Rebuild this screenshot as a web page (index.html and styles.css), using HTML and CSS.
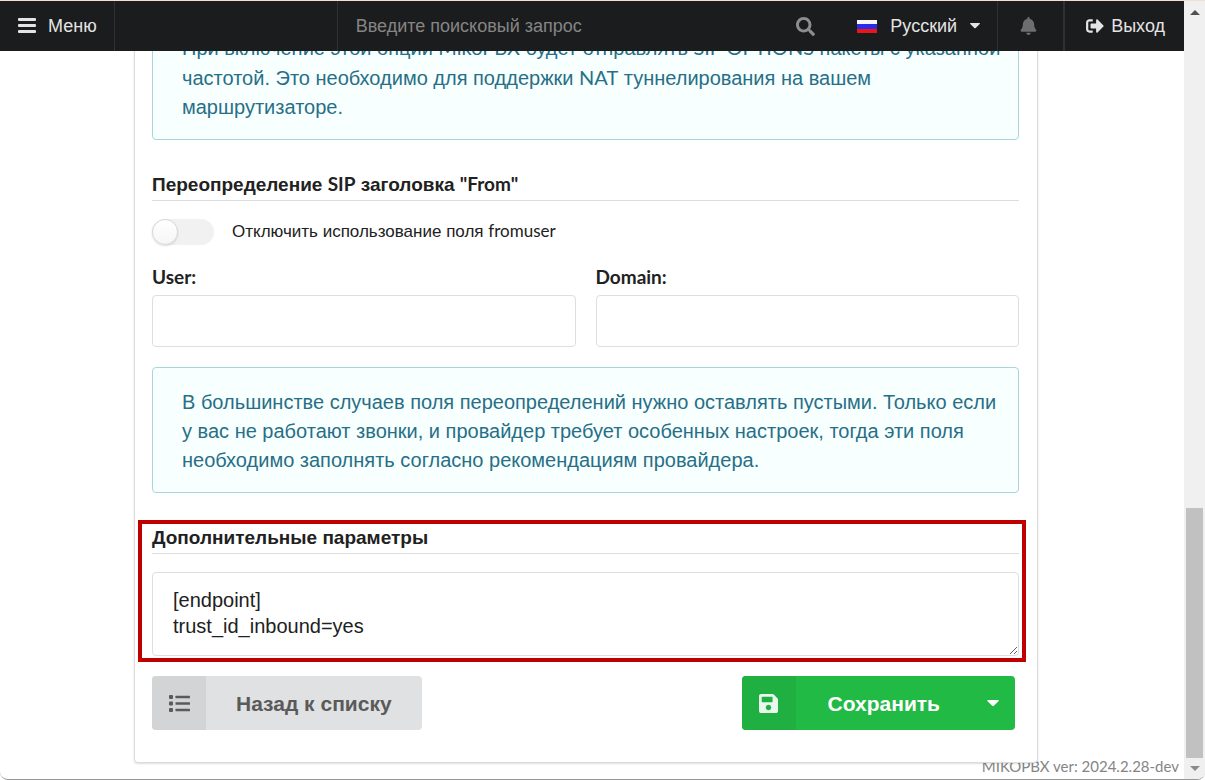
FILE: index.html
```html
<!DOCTYPE html>
<html lang="ru">
<head>
<meta charset="utf-8">
<title>MikoPBX</title>
<link rel="stylesheet" href="styles.css">
</head>
<body>
<div class="window">
  <div class="page">
    <header class="topbar">
      <button class="bar-item menu" type="button">
        <svg class="icon-menu" viewBox="0 0 18 16" aria-hidden="true"><g fill="currentColor"><rect y="0" width="18" height="3" rx="1"/><rect y="6" width="18" height="3" rx="1"/><rect y="12" width="18" height="3" rx="1"/></g></svg>
        Меню
      </button>
      <div class="bar-gap"></div>
      <div class="search">
        <input type="text" aria-label="Поиск" placeholder="Введите поисковый запрос">
        <svg class="icon-search" viewBox="0 0 512 512" aria-hidden="true"><path fill="currentColor" d="M505 442.7 405.300 343c-4.500-4.500-10.600-7-17-7H372c27.600-35.300 44-79.700 44-128C416 93.100 322.900 0 208 0S0 93.100 0 208s93.100 208 208 208c48.300 0 92.700-16.400 128-44v16.300c0 6.400 2.500 12.500 7 17l99.700 99.700c9.400 9.400 24.600 9.400 33.900 0l28.300-28.300c9.400-9.400 9.400-24.600.1-34zM208 336c-70.700 0-128-57.200-128-128 0-70.700 57.200-128 128-128 70.700 0 128 57.200 128 128 0 70.700-57.200 128-128 128z"/></svg>
      </div>
      <button class="bar-item language" type="button">
        <svg class="flag" viewBox="0 0 20 13" aria-hidden="true"><rect width="20" height="13" fill="#f01515"/><rect width="20" height="9" fill="#2b2bea"/><rect width="20" height="4" fill="#f6f6fc"/></svg>
        Русский
        <svg class="caret" viewBox="0 0 10 6" aria-hidden="true"><path fill="currentColor" d="M.5 0h9q.8.300.2 1L5.700 5q-.7.700-1.400 0L.3 1Q-.3.300.5 0z"/></svg>
      </button>
      <button class="bar-item bell" type="button" aria-label="Уведомления">
        <svg class="icon-bell" viewBox="0 0 448 512" aria-hidden="true"><path fill="currentColor" d="M224 512c35.300 0 64-28.700 64-64H160c0 35.300 28.600 64 64 64zm215.400-149.700c-19.300-20.800-55.500-52-55.500-154.300 0-77.700-54.500-139.900-127.900-155.200V32c0-17.700-14.300-32-32-32s-32 14.300-32 32v20.800C118.600 68.100 64.100 130.300 64.100 208c0 102.300-36.200 133.500-55.500 154.300-6 6.400-8.700 14.100-8.600 21.700.1 16.400 13 32 32.100 32h383.800c19.100 0 32-15.600 32.100-32 0-7.600-2.700-15.300-8.600-21.700z"/></svg>
      </button>
      <a class="bar-item logout" href="#">
        <svg class="icon-logout" viewBox="0 0 512 400" aria-hidden="true"><path fill="currentColor" d="m497 217-168 168c-15 15-41 4.500-41-17v-96H152c-13.300 0-24-10.700-24-24v-96c0-13.300 10.700-24 24-24h136V32c0-21.400 25.900-32 41-17l168 168c9.300 9.400 9.300 24.600 0 34zM192 380v-40c0-6.600-5.400-12-12-12H96c-17.700 0-32-14.300-32-32V104c0-17.700 14.300-32 32-32h84c6.600 0 12-5.400 12-12V20c0-6.600-5.400-12-12-12H96C43 8 0 51 0 104v192c0 53 43 96 96 96h84c6.600 0 12-5.400 12-12z"/></svg>
        Выход
      </a>
    </header>

    <main class="viewport">
      <form class="panel">
        <div class="message">При включение этой опции <span class="lat">MikoPBX</span> будет отправлять <span class="lat">SIP OPTIONS</span> пакеты с указанной<br>частотой. Это необходимо для поддержки <span class="lat">NAT</span> туннелирования на вашем<br>маршрутизаторе.</div>

        <h4 class="heading from-heading">Переопределение <span class="lat">SIP</span> заголовка <span class="lat">"From"</span></h4>
        <label class="toggle"><input type="checkbox"><span>Отключить использование поля <span class="lat">fromuser</span></span></label>

        <div class="fields">
          <div class="field"><label for="user">User:</label><input id="user" type="text"></div>
          <div class="field"><label for="domain">Domain:</label><input id="domain" type="text"></div>
        </div>

        <div class="message">В большинстве случаев поля переопределений нужно оставлять пустыми. Только если<br>у вас не работают звонки, и провайдер требует особенных настроек, тогда эти поля<br>необходимо заполнять согласно рекомендациям провайдера.</div>

        <section class="extra">
          <h4 class="heading"><label for="params">Дополнительные параметры</label></h4>
          <textarea id="params" rows="2" spellcheck="false">[endpoint]
trust_id_inbound=yes</textarea>
        </section>

        <div class="actions">
          <button class="btn" type="button">
            <span class="btn-icon"><svg class="icon-list" viewBox="0 0 21 17" aria-hidden="true"><g fill="currentColor"><rect width="4" height="4" rx="1"/><rect y="6.500" width="4" height="4" rx="1"/><rect y="13" width="4" height="4" rx="1"/><rect x="6.500" y=".7" width="14.500" height="2.600" rx=".6"/><rect x="6.500" y="7.200" width="14.500" height="2.600" rx=".6"/><rect x="6.500" y="13.700" width="14.500" height="2.600" rx=".6"/></g></svg></span>
            <span class="btn-text">Назад к списку</span>
          </button>
          <div class="split">
            <button class="btn save" type="button">
              <span class="btn-icon"><svg class="icon-save" viewBox="0 0 448 448" aria-hidden="true"><path fill="currentColor" d="m433.900 97.900-83.800-83.800A48 48 0 0 0 316.100 0H48C21.500 0 0 21.500 0 48v352c0 26.500 21.500 48 48 48h352c26.500 0 48-21.500 48-48V131.900a48 48 0 0 0-14.100-34zM224 384c-35.300 0-64-28.700-64-64s28.700-64 64-64 64 28.700 64 64-28.700 64-64 64zm96-304.500V180c0 6.600-5.400 12-12 12H76c-6.600 0-12-5.400-12-12V76c0-6.600 5.400-12 12-12h228.500c3.200 0 6.200 1.300 8.500 3.500l3.500 3.500c2.200 2.300 3.500 5.300 3.500 8.500z"/></svg></span>
              <span class="btn-text">Сохранить</span>
            </button>
            <button class="btn save more" type="button" aria-label="Другие действия">
              <svg class="caret" viewBox="0 0 10 6" aria-hidden="true"><path fill="currentColor" d="M.5 0h9q.8.300.2 1L5.700 5q-.7.700-1.400 0L.3 1Q-.3.300.5 0z"/></svg>
            </button>
          </div>
        </div>
      </form>
      <footer class="version">MIKOPBX ver: 2024.2.28-dev</footer>
    </main>
  </div>

  <div class="scrollbar" aria-hidden="true">
    <svg class="arrow" viewBox="0 0 10 5"><path fill="#505050" d="M0 5 5 0l5 5z"/></svg>
    <div class="track"><div class="thumb"></div></div>
    <svg class="arrow" viewBox="0 0 10 5"><path fill="#8a8a8a" d="M0 0h10L5 5z"/></svg>
  </div>
</div>
</body>
</html>
```
FILE: styles.css
```css
* {
  box-sizing: border-box;
}

body {
  margin: 0;
  background: #fff;
  color: #212121;
  font: 18px "Liberation Sans", Arial, sans-serif;
}

button,
input,
textarea {
  font-family: inherit;
}

.lat {
  font-family: Lato, sans-serif;
  font-variant-ligatures: none;
}

.window {
  display: flex;
  height: 100vh;
  overflow: hidden;
  border-top: 1px solid #f3ddd6;
  border-bottom: 1px solid #979797;
  border-radius: 0 0 8px 8px;
}

.page {
  flex: 1;
  min-width: 0;
  display: flex;
  flex-direction: column;
}

/* Top bar */

.topbar {
  display: flex;
  flex: none;
  height: 50px;
  background: #1b1c1d;
  color: #e4e4e4;
  position: relative;
  z-index: 2;
}

.bar-item {
  display: flex;
  align-items: center;
  padding: 0 18px;
  border: 0;
  background: none;
  color: inherit;
  font-size: 18px;
  text-decoration: none;
}

.menu {
  gap: 12px;
  padding-right: 17px;
  border-right: 1px solid #303132;
}

.bar-gap {
  flex: 0 1 223px;
  border-right: 1px solid #303132;
}

.search {
  flex: 1;
  display: flex;
  align-items: center;
  padding: 0 24px 0 18px;
}

.search input {
  flex: 1;
  min-width: 0;
  padding: 0;
  border: 0;
  outline: 0;
  background: none;
  color: #fff;
  font-size: 18px;
}

.search input::placeholder {
  color: #858585;
  opacity: 1;
}

.language {
  gap: 13px;
  padding-right: 17px;
  border-right: 1px solid #303132;
}

.bell {
  padding: 0 26px 0 22px;
  color: #6e6e6e;
  border-right: 2px solid #303132;
}

.logout {
  gap: 7px;
  padding: 0 19px 0 21px;
}

.icon-menu {
  width: 18px;
  height: 16px;
}

.icon-search {
  width: 19px;
  height: 19px;
  color: #8d8d8d;
}

.flag {
  width: 20px;
  height: 13px;
}

.caret {
  width: 10px;
  height: 6px;
}

.icon-bell {
  width: 17px;
  height: 18px;
}

.icon-logout {
  width: 18px;
  height: 14px;
}

/* Content, anchored to the end of the page */

.viewport {
  flex: 1;
  min-height: 0;
  display: flex;
  flex-direction: column;
  justify-content: flex-end;
  overflow: hidden;
}

.panel {
  flex: none;
  margin: 0 146px 0 134px;
  padding: 17px 18px 32px 17px;
  background: #fff;
  border: 1px solid #dcdcdd;
  border-radius: 4px;
  box-shadow: 0 1px 2px rgba(34, 36, 38, 0.15);
  position: relative;
  z-index: 1;
}

.message {
  padding: 20px 29px 17px;
  border: 1px solid #a9d5de;
  border-radius: 4px;
  background: #f8ffff;
  color: #276f86;
  font-size: 20px;
  line-height: 29px;
  white-space: nowrap;
}

.heading {
  margin: 0;
  padding-bottom: 3px;
  border-bottom: 1px solid #dcdddd;
  font-size: 19px;
  font-weight: 700;
  line-height: 24px;
}

.from-heading {
  margin-top: 32px;
}

.toggle {
  display: flex;
  align-items: center;
  gap: 18px;
  margin-top: 17px;
  font-size: 17px;
  line-height: 26px;
}

.toggle input {
  appearance: none;
  width: 62px;
  height: 26px;
  margin: 0;
  border-radius: 13px;
  background: #f1f1f1;
}

.toggle input::before {
  content: "";
  display: block;
  box-sizing: border-box;
  width: 26px;
  height: 26px;
  border: 1px solid #d8d8d9;
  border-radius: 50%;
  background: linear-gradient(#fff, #f6f6f6);
  box-shadow: 0 1px 2px rgba(34, 36, 38, 0.15);
}

.toggle input:checked::before {
  margin-left: auto;
}

.fields {
  display: grid;
  grid-template-columns: 1fr 1fr;
  gap: 20px;
  margin: 20px 0;
}

.field {
  display: grid;
  gap: 6px;
}

.field label {
  font: 700 19px/24px Lato, sans-serif;
}

.field input,
textarea {
  width: 100%;
  border: 1px solid #dededf;
  border-radius: 4px;
  background: #fff;
  color: #212121;
  font-size: 20px;
  outline: 0;
}

.field input {
  height: 52px;
  padding: 0 20px;
}

.extra {
  position: relative;
  margin-top: 33px;
}

/* Highlight frame around the section */
.extra::after {
  content: "";
  position: absolute;
  inset: -6px -7px -6px -14px;
  border: 4px solid #c00000;
  pointer-events: none;
}

textarea {
  display: block;
  height: 84px;
  margin-top: 18px;
  padding: 14px 20px;
  line-height: 26px;
  resize: vertical;
}

.actions {
  display: flex;
  justify-content: space-between;
  margin: 20px 4px 0 0;
}

.btn {
  display: flex;
  align-items: center;
  height: 54px;
  padding: 0;
  overflow: hidden;
  border: 0;
  border-radius: 4px;
  background: #e0e1e2;
  color: #5a5a5a;
  font-size: 21px;
  font-weight: 700;
}

.btn-icon {
  display: flex;
  align-items: center;
  justify-content: center;
  width: 54px;
  height: 54px;
  background: #d3d4d5;
}

.btn-text {
  padding: 2px 30px 0;
}

.split {
  display: flex;
}

.save {
  border-radius: 4px 0 0 4px;
  background: #21ba45;
  color: #fff;
}

.save .btn-icon {
  background: #1fb041;
  color: #e9f8ec;
}

.save .btn-text {
  padding: 2px 31px 0 32px;
}

.more {
  padding: 0 16px;
  border-radius: 0 4px 4px 0;
}

.more .caret {
  width: 12px;
  height: 7px;
}

.icon-list {
  width: 21px;
  height: 17px;
}

.icon-save {
  width: 19px;
  height: 19px;
}

.version {
  flex: none;
  margin-top: -7px;
  padding: 0 5px 3px;
  color: #858585;
  font: 15px/20px Lato, sans-serif;
  text-align: right;
}

/* Scrollbar */

.scrollbar {
  display: flex;
  flex-direction: column;
  align-items: center;
  gap: 8px;
  flex: none;
  width: 21px;
  padding: 9px 0 8px;
  background: #f0f0f0;
}

.arrow {
  width: 10px;
  height: 5px;
}

.track {
  flex: 1;
  display: flex;
  align-items: flex-end;
}

.thumb {
  width: 17px;
  height: 34%;
  background: #c1c1c1;
}
```
